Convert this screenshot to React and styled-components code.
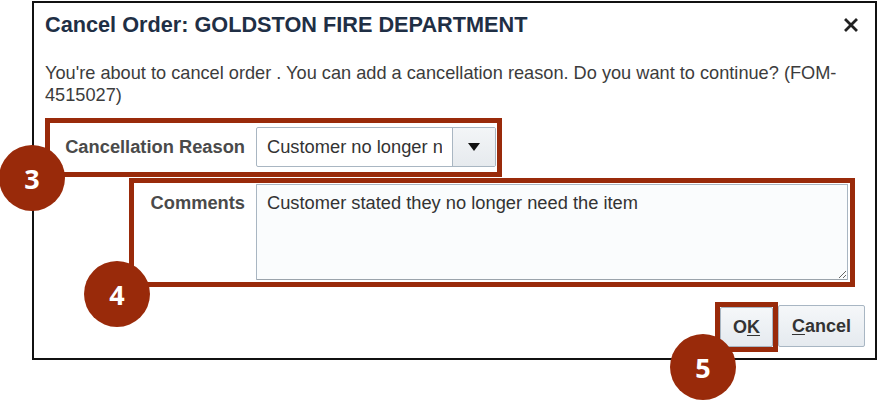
import styled, { createGlobalStyle } from "styled-components";

const GlobalStyle = createGlobalStyle`
  html, body {
    margin: 0;
    padding: 0;
    background: #ffffff;
  }
  body {
    font-family: "Liberation Sans", Arial, sans-serif;
  }
`;

const MARK = "#992a0a";

const Page = styled.div`
  position: relative;
  width: 880px;
  height: 407px;
  overflow: hidden;
  padding-top: 1px;
  box-sizing: border-box;
`;

const Dialog = styled.div`
  margin-left: 32px;
  width: 845px;
  height: 359px;
  box-sizing: border-box;
  border: 2px solid #111;
  background: #fff;
  padding: 0 10px 0 11px;
  display: flex;
  flex-direction: column;
`;

const Header = styled.div`
  height: 42px;
  padding-top: 2px;
  box-sizing: border-box;
  display: flex;
  align-items: center;
  justify-content: space-between;
  padding-right: 7px;
`;

const Title = styled.h1`
  margin: 0;
  font-size: 21.7px;
  font-weight: bold;
  color: #1f2f45;
`;

const CloseButton = styled.button`
  border: none;
  background: none;
  padding: 0;
  width: 14px;
  height: 14px;
  display: flex;
  cursor: pointer;
`;

const Message = styled.p`
  margin: 17px 0 0;
  font-size: 18.2px;
  line-height: 22px;
  color: #3c3c3c;
`;

const FieldRow = styled.div`
  display: grid;
  grid-template-columns: ${(p) => p.$labelWidth}px auto;
  column-gap: 11px;
  align-items: ${(p) => (p.$top ? "start" : "center")};
  width: ${(p) => p.$width}px;
  box-sizing: border-box;
  margin-left: ${(p) => p.$offset}px;
  margin-top: ${(p) => p.$gap}px;
  padding: ${(p) => p.$pad};
  border: 5px solid ${MARK};
`;

const Label = styled.label`
  text-align: right;
  font-size: 18.3px;
  font-weight: bold;
  line-height: 20px;
  color: #4a4a4a;
  padding-top: ${(p) => (p.$top ? "9px" : "0")};
`;

const Select = styled.div`
  display: flex;
  height: 40px;
  width: 240px;
  box-sizing: border-box;
  border: 1px solid #a9b6c2;
  border-radius: 2px;
  background: #fff;
`;

const SelectValue = styled.div`
  flex: 1;
  display: flex;
  align-items: center;
  padding: 0 10px;
  font-size: 18.3px;
  color: #333;
  min-width: 0;
`;

const ValueClip = styled.span`
  overflow: hidden;
  white-space: nowrap;
  width: 176px;
`;

const SelectButton = styled.div`
  width: 42px;
  border-left: 1px solid #a9b6c2;
  background: linear-gradient(#f3f5f7, #e6eaee);
  display: flex;
  align-items: center;
  justify-content: center;
`;

const TextArea = styled.textarea`
  width: 592px;
  height: 96px;
  box-sizing: border-box;
  border: 1px solid #a9b6c2;
  border-bottom-color: #9aa3ab;
  border-radius: 1px;
  background: #fafcfd;
  padding: 8px 10px;
  font-family: "Liberation Sans", Arial, sans-serif;
  font-size: 18.3px;
  line-height: 20px;
  color: #333;
  resize: both;
  outline: none;
`;

const Footer = styled.div`
  margin-top: 15px;
  display: flex;
  justify-content: flex-end;
  align-items: flex-start;
`;

const Highlight = styled.div`
  border: 5px solid ${MARK};
  display: flex;
`;

const Button = styled.button`
  height: ${(p) => p.$h}px;
  margin-top: ${(p) => p.$mt || 0}px;
  padding: 0 ${(p) => p.$px}px;
  border: 1px solid #a8b6c3;
  border-radius: 2px;
  background: linear-gradient(#f5f7f9, #e5eaef);
  font-family: "Liberation Sans", Arial, sans-serif;
  font-size: 18px;
  font-weight: bold;
  color: #333;
  cursor: pointer;

  u {
    text-underline-offset: 2px;
  }
`;

const Badge = styled.div`
  position: absolute;
  left: ${(p) => p.$x}px;
  top: ${(p) => p.$y}px;
  width: 66px;
  height: 66px;
  border-radius: 50%;
  background: ${MARK};
  color: #fff;
  display: flex;
  align-items: center;
  justify-content: center;
  font-family: "Open Sans", "Liberation Sans", sans-serif;
  font-weight: bold;
  font-size: 27px;
`;

export default function App() {
  return (
    <Page>
      <GlobalStyle />
      <Dialog>
        <Header>
          <Title>Cancel Order: GOLDSTON FIRE DEPARTMENT</Title>
          <CloseButton aria-label="Close">
            <svg width="14" height="14" viewBox="0 0 14 14">
              <path
                d="M2 2 L12 12 M12 2 L2 12"
                stroke="#222"
                strokeWidth="2.8"
                strokeLinecap="square"
              />
            </svg>
          </CloseButton>
        </Header>
        <Message>
          You're about to cancel order . You can add a cancellation reason. Do
          you want to continue? (FOM-4515027)
        </Message>
        <FieldRow $labelWidth={195} $width={457} $offset={0} $gap={12} $pad="4px 1px 5px 0">
          <Label>Cancellation Reason</Label>
          <Select>
            <SelectValue>
              <ValueClip>Customer no longer need the item</ValueClip>
            </SelectValue>
            <SelectButton>
              <svg width="14" height="10" viewBox="0 0 14 10">
                <path d="M1 1 L13 1 L7 9 Z" fill="#111" />
              </svg>
            </SelectButton>
          </Select>
        </FieldRow>
        <FieldRow $labelWidth={111} $width={726} $offset={84} $gap={1} $pad="1px 2px 2px 0" $top>
          <Label $top>Comments</Label>
          <TextArea
            readOnly
            defaultValue="Customer stated they no longer need the item"
          />
        </FieldRow>
        <Footer>
          <Highlight>
            <Button $h={40} $px={12}>
              O<u>K</u>
            </Button>
          </Highlight>
          <Button $h={42} $mt={3} $px={13}>
            <u>C</u>ancel
          </Button>
        </Footer>
      </Dialog>
      <Badge $x={-1} $y={145}>3</Badge>
      <Badge $x={84} $y={261}>4</Badge>
      <Badge $x={670} $y={334}>5</Badge>
    </Page>
  );
}
